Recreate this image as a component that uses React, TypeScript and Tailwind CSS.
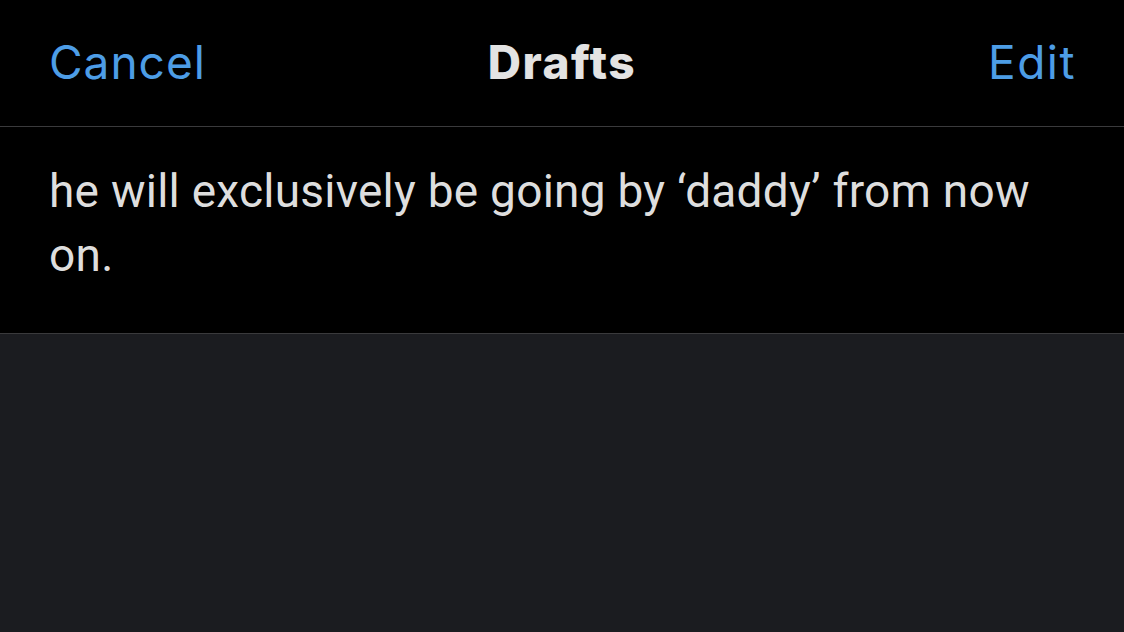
import React from "react";

export default function App() {
  return (
    <div
      className="w-[1124px] h-[632px] flex flex-col bg-[#1b1c20] overflow-hidden"
      style={{ fontFamily: "Inter, 'Noto Sans', sans-serif" }}
    >
      <div className="h-[126px] shrink-0 bg-black flex items-center justify-between pl-[49px] pr-[48px] pb-[3px] relative">
        <span className="text-[46px] leading-none tracking-[1px] text-[#4d9de6]">Cancel</span>
        <span className="absolute left-1/2 -translate-x-1/2 text-[46px] leading-none font-extrabold tracking-[1.5px] text-[#e3e3e3]">
          Drafts
        </span>
        <span className="text-[46px] leading-none tracking-[1.5px] text-[#4d9de6]">Edit</span>
      </div>
      <div className="h-px shrink-0 bg-[#3a3a3c]" />
      <div className="h-[206px] shrink-0 bg-black pl-[49px] pr-[40px] pt-[32px]">
        <p
          className="text-[46px] leading-[64px] tracking-[0.25px] text-[#dedede]"
          style={{ fontFamily: "Roboto, 'Noto Sans', sans-serif" }}
        >
          he will exclusively be going by ‘daddy’ from now on.
        </p>
      </div>
      <div className="h-px shrink-0 bg-[#3a3a3c]" />
      <div className="flex-1 bg-[#1b1c20]" />
    </div>
  );
}
